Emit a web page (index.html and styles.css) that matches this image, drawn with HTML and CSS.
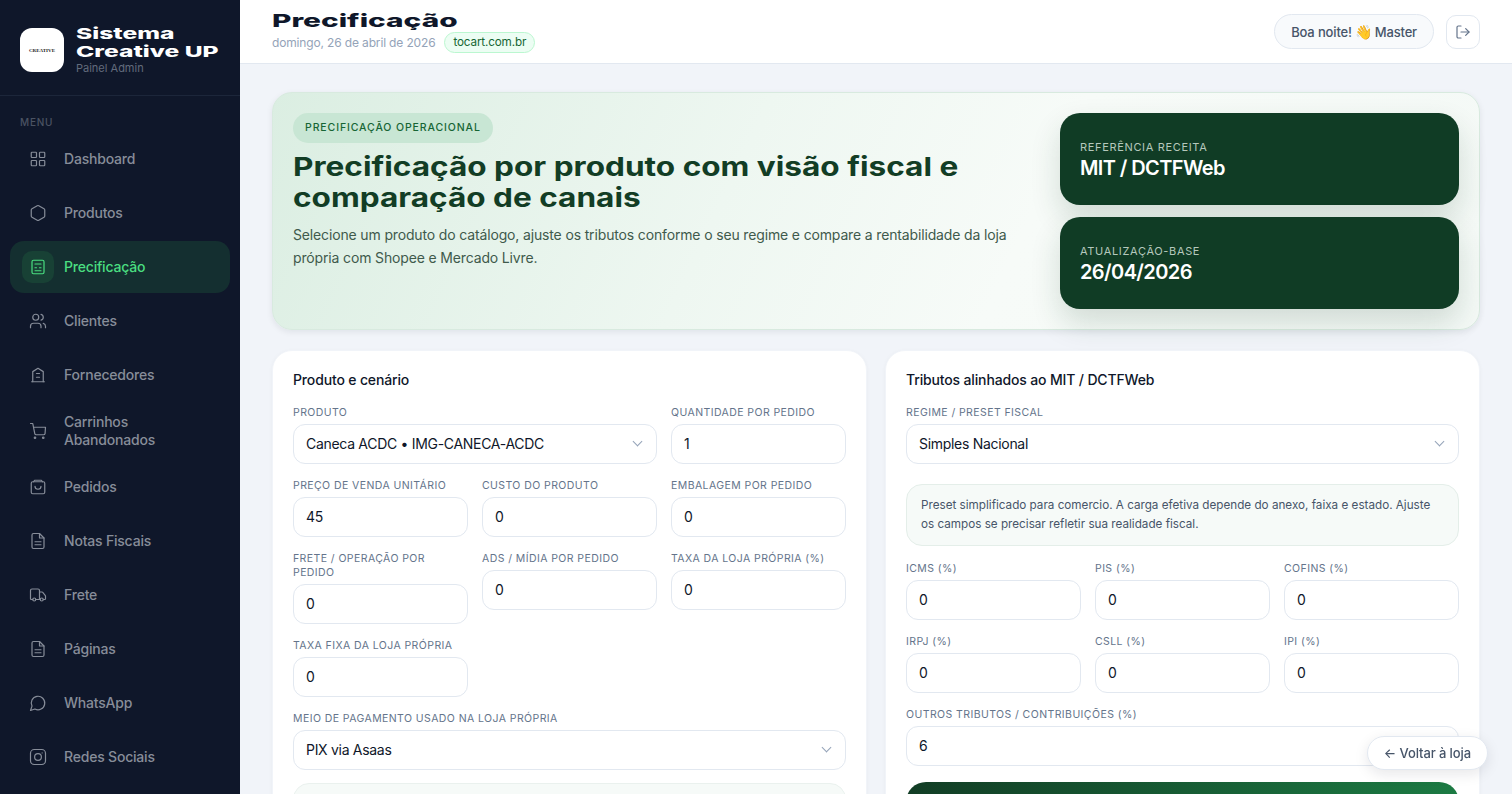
FILE: index.html
```html
<!DOCTYPE html>
<html lang="pt-BR">
<head>
  <meta charset="UTF-8" />
  <title>Precificação - Sistema Creative UP</title>
  <meta name="viewport" content="width=device-width, initial-scale=1.0" />
  <link rel="stylesheet" href="styles.css">
</head>
<body>
  <div class="app">
    <aside class="sidebar">
      <div class="brand">
        <div class="brand-logo"><span>CREATIVE</span></div>
        <div class="brand-text">
          <div class="brand-name">Sistema<br>Creative UP</div>
          <div class="brand-sub">Painel Admin</div>
        </div>
      </div>
      <div class="menu-title">MENU</div>
      <nav class="menu">
        <a class="menu-item"><span class="menu-icon"><svg viewBox="0 0 24 24"><rect x="3" y="3" width="7" height="7" rx="1"/><rect x="14" y="3" width="7" height="7" rx="1"/><rect x="14" y="14" width="7" height="7" rx="1"/><rect x="3" y="14" width="7" height="7" rx="1"/></svg></span>Dashboard</a>
        <a class="menu-item"><span class="menu-icon"><svg viewBox="0 0 24 24"><path d="M21 16V8a2 2 0 0 0-1-1.73l-7-4a2 2 0 0 0-2 0l-7 4A2 2 0 0 0 3 8v8a2 2 0 0 0 1 1.73l7 4a2 2 0 0 0 2 0l7-4A2 2 0 0 0 21 16z"/></svg></span>Produtos</a>
        <a class="menu-item active"><span class="menu-icon"><svg viewBox="0 0 24 24"><rect x="4" y="3" width="16" height="18" rx="2"/><path d="M8 8h8"/><path d="M8 13h2"/><path d="M14 13h2"/><path d="M8 17h8"/></svg></span>Precificação</a>
        <a class="menu-item"><span class="menu-icon"><svg viewBox="0 0 24 24"><path d="M16 21v-2a4 4 0 0 0-4-4H6a4 4 0 0 0-4 4v2"/><circle cx="9" cy="7" r="4"/><path d="M22 21v-2a4 4 0 0 0-3-3.87"/><path d="M16 3.13a4 4 0 0 1 0 7.75"/></svg></span>Clientes</a>
        <a class="menu-item"><span class="menu-icon"><svg viewBox="0 0 24 24"><path d="M5 21V7.500L12 3l7 4.500V21"/><path d="M3.500 21h17"/><path d="M10 10h4"/><path d="M10 15h4"/></svg></span>Fornecedores</a>
        <a class="menu-item"><span class="menu-icon"><svg viewBox="0 0 24 24"><circle cx="8" cy="21" r="1"/><circle cx="19" cy="21" r="1"/><path d="M2 2h3l2.700 13.400a2 2 0 0 0 2 1.600h9.700a2 2 0 0 0 2-1.600L22 7H6"/></svg></span>Carrinhos Abandonados</a>
        <a class="menu-item"><span class="menu-icon"><svg viewBox="0 0 24 24"><rect x="3" y="5" width="18" height="16" rx="2"/><path d="M6 5l1.500-2h9L18 5"/><path d="M8 11a4 4 0 0 0 8 0"/></svg></span>Pedidos</a>
        <a class="menu-item"><span class="menu-icon"><svg viewBox="0 0 24 24"><path d="M14 2H6a2 2 0 0 0-2 2v16a2 2 0 0 0 2 2h12a2 2 0 0 0 2-2V8z"/><path d="M14 2v6h6"/><path d="M8 13h8"/><path d="M8 17h8"/></svg></span>Notas Fiscais</a>
        <a class="menu-item"><span class="menu-icon"><svg viewBox="0 0 24 24"><path d="M14 18V6a2 2 0 0 0-2-2H4a2 2 0 0 0-2 2v11a1 1 0 0 0 1 1h2"/><path d="M15 18H9"/><path d="M19 18h2a1 1 0 0 0 1-1v-3.650a1 1 0 0 0-.22-.62l-3.480-4.350A1 1 0 0 0 17.520 8H14"/><circle cx="17" cy="18" r="2"/><circle cx="7" cy="18" r="2"/></svg></span>Frete</a>
        <a class="menu-item"><span class="menu-icon"><svg viewBox="0 0 24 24"><path d="M14 2H6a2 2 0 0 0-2 2v16a2 2 0 0 0 2 2h12a2 2 0 0 0 2-2V8z"/><path d="M14 2v6h6"/><path d="M8 13h8"/><path d="M8 17h8"/></svg></span>Páginas</a>
        <a class="menu-item"><span class="menu-icon"><svg viewBox="0 0 24 24"><path d="M7.900 20A9 9 0 1 0 4 16.100L2 22Z"/></svg></span>WhatsApp</a>
        <a class="menu-item"><span class="menu-icon"><svg viewBox="0 0 24 24"><rect x="2" y="2" width="20" height="20" rx="5"/><circle cx="12" cy="12" r="4.500"/><path d="M17.500 6.500h.01"/></svg></span>Redes Sociais</a>
      </nav>
    </aside>

    <div class="content">
      <header class="topbar">
        <div>
          <h1 class="page-title">Precificação</h1>
          <div class="page-meta">
            <span>domingo, 26 de abril de 2026</span>
            <span class="domain-pill">tocart.com.br</span>
          </div>
        </div>
        <div class="topbar-right">
          <div class="greeting">Boa noite! <span class="wave">👋</span> Master</div>
          <button class="logout-btn"><svg viewBox="0 0 24 24"><path d="M9 21H5a2 2 0 0 1-2-2V5a2 2 0 0 1 2-2h4"/><path d="M16 17l5-5-5-5"/><path d="M21 12H9"/></svg></button>
        </div>
      </header>

      <main class="main">
        <section class="hero">
          <div class="hero-left">
            <span class="hero-tag">PRECIFICAÇÃO OPERACIONAL</span>
            <h2 class="hero-title">Precificação por produto com visão fiscal e<br>comparação de canais</h2>
            <p class="hero-desc">Selecione um produto do catálogo, ajuste os tributos conforme o seu regime e compare a rentabilidade da loja própria com Shopee e Mercado Livre.</p>
          </div>
          <div class="hero-right">
            <div class="hero-card">
              <div class="hero-card-label">REFERÊNCIA RECEITA</div>
              <div class="hero-card-value">MIT / DCTFWeb</div>
            </div>
            <div class="hero-card">
              <div class="hero-card-label">ATUALIZAÇÃO-BASE</div>
              <div class="hero-card-value">26/04/2026</div>
            </div>
          </div>
        </section>

        <div class="columns">
          <section class="card">
            <h3 class="card-title">Produto e cenário</h3>
            <div class="form-grid">
              <label class="field span-2"><span class="field-label">Produto</span><div class="input select">Caneca ACDC • IMG-CANECA-ACDC</div></label>
              <label class="field"><span class="field-label">Quantidade por pedido</span><div class="input">1</div></label>
              <label class="field"><span class="field-label">Preço de venda unitário</span><div class="input">45</div></label>
              <label class="field"><span class="field-label">Custo do produto</span><div class="input">0</div></label>
              <label class="field"><span class="field-label">Embalagem por pedido</span><div class="input">0</div></label>
              <label class="field"><span class="field-label">Frete / operação por pedido</span><div class="input">0</div></label>
              <label class="field"><span class="field-label">Ads / mídia por pedido</span><div class="input">0</div></label>
              <label class="field"><span class="field-label">Taxa da loja própria (%)</span><div class="input">0</div></label>
              <label class="field"><span class="field-label">Taxa fixa da loja própria</span><div class="input">0</div></label>
              <label class="field span-3"><span class="field-label">Meio de pagamento usado na loja própria</span><div class="input select">PIX via Asaas</div></label>
            </div>
            <div class="soft-box"></div>
          </section>

          <section class="card">
            <h3 class="card-title">Tributos alinhados ao MIT / DCTFWeb</h3>
            <label class="field"><span class="field-label">Regime / preset fiscal</span><div class="input select">Simples Nacional</div></label>
            <div class="note">Preset simplificado para comercio. A carga efetiva depende do anexo, faixa e estado. Ajuste os campos se precisar refletir sua realidade fiscal.</div>
            <div class="form-grid">
              <label class="field"><span class="field-label">ICMS (%)</span><div class="input">0</div></label>
              <label class="field"><span class="field-label">PIS (%)</span><div class="input">0</div></label>
              <label class="field"><span class="field-label">COFINS (%)</span><div class="input">0</div></label>
              <label class="field"><span class="field-label">IRPJ (%)</span><div class="input">0</div></label>
              <label class="field"><span class="field-label">CSLL (%)</span><div class="input">0</div></label>
              <label class="field"><span class="field-label">IPI (%)</span><div class="input">0</div></label>
              <label class="field span-3"><span class="field-label">Outros tributos / contribuições (%)</span><div class="input">6</div></label>
            </div>
            <div class="green-box"></div>
          </section>
        </div>
      </main>
    </div>
  </div>
  <a class="back-link">← Voltar à loja</a>
</body>
</html>
```

FILE: styles.css
```css
* {
  box-sizing: border-box;
}

body {
  margin: 0;
  height: 100vh;
  overflow: hidden;
  font-family: Inter, "Noto Sans", sans-serif;
  background: #f1f4f9;
  color: #0f172a;
}

.app {
  display: flex;
  height: 100vh;
}

/* sidebar */
.sidebar {
  width: 240px;
  flex-shrink: 0;
  background: #0f172a;
  overflow: hidden;
}

.brand {
  display: flex;
  align-items: center;
  gap: 12px;
  height: 96px;
  padding: 5px 20px 0;
  border-bottom: 1px solid #1c263a;
}

.brand-logo {
  width: 44px;
  height: 44px;
  border-radius: 12px;
  background: #fff;
  display: flex;
  align-items: center;
  justify-content: center;
  flex-shrink: 0;
}

.brand-logo span {
  font-family: "Liberation Serif", serif;
  font-size: 5px;
  font-weight: 700;
  color: #222;
}

.brand-name {
  font-weight: 800;
  font-size: 15px;
  line-height: 18px;
  color: #fff;
  white-space: nowrap;
  transform: scaleX(1.64);
  transform-origin: left;
}

.brand-sub {
  font-size: 11px;
  line-height: 14px;
  color: #626b7c;
}

.menu-title {
  padding: 19px 20px 0;
  font-size: 10px;
  line-height: 14px;
  font-weight: 500;
  letter-spacing: 0.08em;
  color: #4b5362;
}

.menu {
  padding: 4px 10px 0;
  display: flex;
  flex-direction: column;
  gap: 2px;
}

.menu-item {
  display: flex;
  align-items: center;
  gap: 10px;
  padding: 10px 12px;
  border-radius: 14px;
  font-size: 14px;
  line-height: 18px;
  font-weight: 500;
  letter-spacing: -0.2px;
  color: #878d99;
}

.menu-icon {
  width: 32px;
  height: 32px;
  flex-shrink: 0;
  border-radius: 10px;
  display: flex;
  align-items: center;
  justify-content: center;
}

.menu-icon svg {
  width: 18px;
  height: 18px;
  fill: none;
  stroke: currentColor;
  stroke-width: 1.6;
  stroke-linecap: round;
  stroke-linejoin: round;
}

.menu-item.active {
  background: #142f30;
  color: #4ade80;
}

.menu-item.active .menu-icon {
  background: #184135;
}

/* topbar */
.content {
  flex: 1;
  min-width: 0;
  display: flex;
  flex-direction: column;
  overflow: hidden;
}

.topbar {
  height: 64px;
  flex-shrink: 0;
  background: #fff;
  border-bottom: 1px solid #e2e8f0;
  padding: 0 32px;
  display: flex;
  align-items: center;
  justify-content: space-between;
}

.page-title {
  margin: 0;
  font-size: 18px;
  line-height: 22px;
  font-weight: 800;
  color: #0f172a;
  white-space: nowrap;
  transform: scaleX(1.654);
  transform-origin: left;
}

.page-meta {
  display: flex;
  align-items: center;
  gap: 9px;
  font-size: 12px;
  letter-spacing: -0.15px;
  color: #94a3b8;
}

.domain-pill {
  padding: 2px 8px;
  border: 1px solid #bbf7d0;
  border-radius: 20px;
  background: #ecfdf3;
  color: #166534;
  font-size: 11.7px;
  line-height: 15px;
}

.topbar-right {
  display: flex;
  align-items: center;
  gap: 12px;
}

.greeting {
  height: 35px;
  padding: 0 16px;
  display: flex;
  align-items: center;
  gap: 3px;
  border: 1px solid #e2e8f0;
  border-radius: 20px;
  background: #f8fafc;
  font-size: 13px;
  font-weight: 500;
  letter-spacing: -0.15px;
  color: #475569;
}

.wave {
  font-size: 14px;
}

.logout-btn {
  width: 34px;
  height: 34px;
  padding: 0;
  border: 1px solid #e2e8f0;
  border-radius: 10px;
  background: #fff;
  color: #64748b;
  display: flex;
  align-items: center;
  justify-content: center;
}

.logout-btn svg {
  width: 16px;
  height: 16px;
  fill: none;
  stroke: currentColor;
  stroke-width: 1.8;
  stroke-linecap: round;
  stroke-linejoin: round;
}

/* main */
.main {
  padding: 28px 32px;
}

.hero {
  height: 238px;
  display: flex;
  justify-content: space-between;
  padding: 20px;
  border: 1px solid #d8eadf;
  border-radius: 20px;
  background: linear-gradient(115deg, #dbeee2 0%, #eef7f1 38%, #f7fbf8 62%, #f4f9f6 100%);
  box-shadow: 0 2px 6px rgba(15, 23, 42, 0.08);
}

.hero-left {
  width: 730px;
}

.hero-tag {
  display: inline-block;
  padding: 0 12px;
  height: 30px;
  line-height: 30px;
  border-radius: 20px;
  background: #c8e6d4;
  color: #166534;
  font-size: 10.5px;
  font-weight: 500;
  letter-spacing: 0.085em;
}

.hero-title {
  margin: 8px 0 0;
  font-size: 26px;
  line-height: 31px;
  font-weight: 700;
  color: #123d25;
  white-space: nowrap;
  transform: scaleX(1.214);
  transform-origin: left;
}

.hero-desc {
  margin: 10px 0 0;
  font-size: 14px;
  line-height: 23px;
  letter-spacing: -0.15px;
  color: #3f5a4c;
}

.hero-right {
  width: 399px;
  display: flex;
  flex-direction: column;
  gap: 12px;
}

.hero-card {
  height: 92px;
  padding: 2px 20px 0;
  border-radius: 20px;
  background: #103c25;
  box-shadow: 0 14px 30px rgba(16, 60, 37, 0.16);
  display: flex;
  flex-direction: column;
  justify-content: center;
}

.hero-card-label {
  font-size: 11px;
  line-height: 15px;
  letter-spacing: 0.06em;
  color: #b5c8bc;
}

.hero-card-value {
  font-size: 20px;
  line-height: 26px;
  font-weight: 600;
  letter-spacing: -0.6px;
  color: #fff;
}

.columns {
  margin-top: 20px;
  display: grid;
  grid-template-columns: 1fr 1fr;
  gap: 18px;
}

.card {
  background: #fff;
  border: 1px solid #f1f4f9;
  border-radius: 20px;
  padding: 20px 20px 20px;
  box-shadow: 0 1px 4px rgba(15, 23, 42, 0.04);
}

.card-title {
  margin: 0 0 17px;
  font-size: 14px;
  line-height: 18px;
  font-weight: 500;
  letter-spacing: -0.15px;
  color: #0f172a;
}

.form-grid {
  display: grid;
  grid-template-columns: repeat(3, 1fr);
  gap: 15px 14px;
  align-items: start;
}

.span-2 {
  grid-column: span 2;
}

.span-3 {
  grid-column: span 3;
}

.field {
  display: block;
}

.field-label {
  display: block;
  margin-bottom: 4px;
  font-size: 10.5px;
  line-height: 14px;
  letter-spacing: 0.04em;
  text-transform: uppercase;
  color: #64748b;
}

.input {
  height: 40px;
  padding: 0 12px 2px;
  border: 1px solid #e2e8f0;
  border-radius: 12px;
  background: #fff;
  display: flex;
  align-items: center;
  font-size: 14px;
  letter-spacing: -0.3px;
  color: #0f172a;
}

.select {
  position: relative;
}

.select::after {
  content: "";
  position: absolute;
  right: 15px;
  top: 13px;
  width: 6px;
  height: 6px;
  border-right: 1px solid #94a3b8;
  border-bottom: 1px solid #94a3b8;
  transform: rotate(45deg);
}

.soft-box {
  height: 120px;
  margin-top: 13px;
  border: 1px solid #eaf1ee;
  border-radius: 16px;
  background: #f6faf8;
}

.note {
  margin: 20px 0 16px;
  padding: 11px 24px 11px 14px;
  border: 1px solid #e4eee9;
  border-radius: 16px;
  background: #f6faf8;
  font-size: 11.7px;
  line-height: 19px;
  color: #475569;
}

.green-box {
  height: 120px;
  margin-top: 16px;
  border-radius: 20px;
  background: linear-gradient(90deg, #123d25, #1c7a43);
}

.back-link {
  position: fixed;
  right: 24px;
  bottom: 24px;
  height: 34px;
  padding: 0 16px;
  display: flex;
  align-items: center;
  border: 1px solid #e2e8f0;
  border-radius: 20px;
  background: #fff;
  box-shadow: 0 4px 14px rgba(15, 23, 42, 0.1);
  font-size: 13px;
  font-weight: 500;
  letter-spacing: -0.1px;
  color: #475569;
}
```
